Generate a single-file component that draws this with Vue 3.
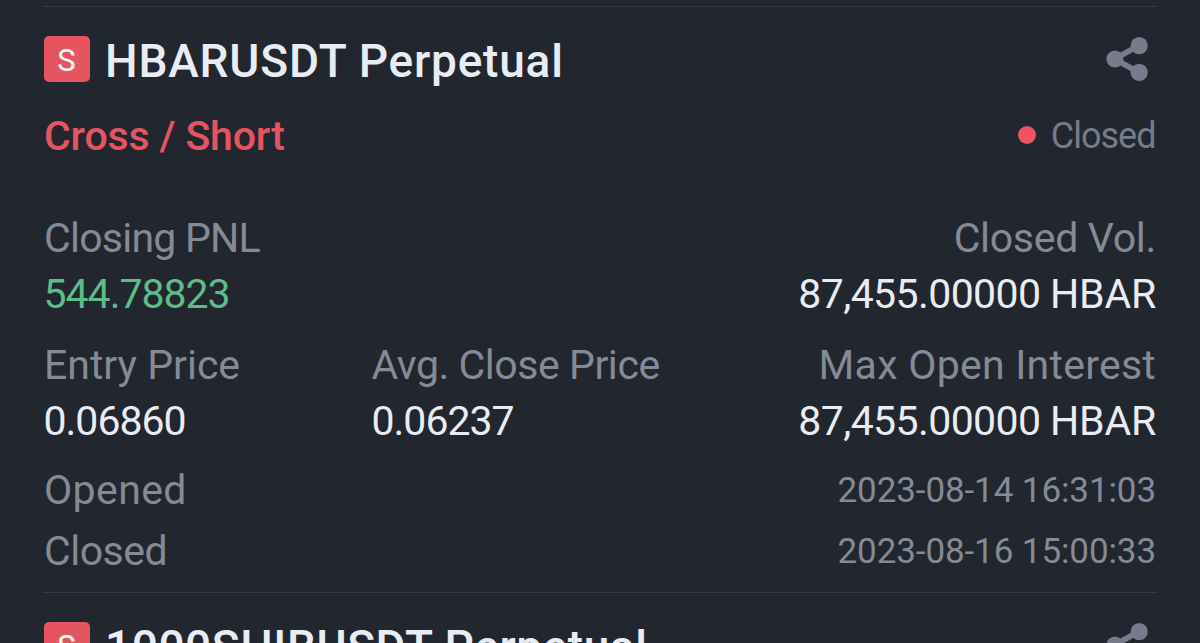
<template>
  <main class="history">
    <article v-for="p in positions" :key="p.symbol" class="card">
      <header class="card-head">
        <span class="badge">S</span>
        <h2 class="symbol">{{ p.symbol }} Perpetual</h2>
        <svg class="share" viewBox="0 0 42 44">
          <path d="M33 8.5 L8.5 22 L33 35.5" fill="none" stroke="currentColor" stroke-width="5.8" />
          <circle cx="8.9" cy="22" r="8.6" />
          <circle cx="33.2" cy="8.7" r="8.6" />
          <circle cx="33.2" cy="35.3" r="8.6" />
        </svg>
      </header>

      <template v-if="p.side">
        <div class="row side-row">
          <span class="side">{{ p.side }}</span>
          <span class="status"><i class="dot"></i><span>Closed</span></span>
        </div>

        <div class="row pnl-row">
          <div class="cell">
            <span class="label pnl-label">Closing PNL</span>
            <span class="value profit">{{ p.pnl }}</span>
          </div>
          <div class="cell right">
            <span class="label vol-label">Closed Vol.</span>
            <span class="value amount">{{ p.volume }} <span class="unit">HBAR</span></span>
          </div>
        </div>

        <div class="prices">
          <div class="cell">
            <span class="label">Entry Price</span>
            <span class="value">{{ p.entry }}</span>
          </div>
          <div class="cell">
            <span class="label close-label">Avg. Close Price</span>
            <span class="value">{{ p.close }}</span>
          </div>
          <div class="cell right">
            <span class="label interest-label">Max Open Interest</span>
            <span class="value amount">{{ p.volume }} <span class="unit">HBAR</span></span>
          </div>
        </div>

        <div class="times">
          <div class="row time-row">
            <span class="label opened-label">Opened</span>
            <time>{{ p.opened }}</time>
          </div>
          <div class="row time-row">
            <span class="label closed-label">Closed</span>
            <time>{{ p.closed }}</time>
          </div>
        </div>
      </template>
    </article>
  </main>
</template>

<script setup>
const positions = [
  {
    symbol: 'HBARUSDT',
    side: 'Cross / Short',
    pnl: '544.78823',
    volume: '87,455.00000',
    entry: '0.06860',
    close: '0.06237',
    opened: '2023-08-14 16:31:03',
    closed: '2023-08-16 15:00:33',
  },
  // only the head of this one is in view
  { symbol: '1000SHIBUSDT' },
]
</script>

<style>
body {
  margin: 0;
  background: #22262f;
  overflow: hidden;
}
</style>

<style scoped>
.history {
  box-sizing: border-box;
  height: 643px;
  padding: 6px 43px 0;
  overflow: hidden;
  background: #22262f;
  color: #eaecf3;
  font-family: Roboto, "Liberation Sans", sans-serif;
}

.card {
  box-sizing: border-box;
  height: 586px;
  padding-top: 22px;
  border-top: 1px solid #353943;
}

.card-head {
  display: flex;
  align-items: center;
  height: 60px;
}

.badge {
  width: 46px;
  height: 46px;
  margin-left: 0.5px;
  border-radius: 5px;
  background: #e45561;
  color: #fff;
  font-size: 31px;
  line-height: 49px;
  text-align: center;
}

.symbol {
  margin: 0 0 0 15.5px;
  padding-top: 3px;
  font-size: 46px;
  font-weight: 500;
  line-height: 56px;
  letter-spacing: 0.8px;
  white-space: nowrap;
}

.card + .card .symbol {
  letter-spacing: 0.55px;
}

.share {
  width: 42px;
  height: 44px;
  margin-left: auto;
  margin-right: 9px;
  color: #767c8c;
  fill: currentColor;
}

.row {
  display: flex;
  justify-content: space-between;
}

.side-row {
  height: 56px;
  margin-top: 19px;
  line-height: 56px;
}

.side {
  padding-left: 1px;
  color: #e45561;
  font-size: 41px;
  font-weight: 500;
  letter-spacing: -0.15px;
}

.status {
  display: flex;
  align-items: center;
  gap: 15px;
  color: #767c88;
  font-size: 36px;
  letter-spacing: -1px;
}

.dot {
  width: 18px;
  height: 18px;
  margin-top: -2px;
  border-radius: 50%;
  background: #ee5361;
}

.status span {
  padding-right: 1.5px;
}

.pnl-row {
  margin-top: 46px;
}

.prices {
  display: grid;
  grid-template-columns: 328px 1fr 1fr;
  margin-top: 15px;
}

.cell {
  display: flex;
  flex-direction: column;
  line-height: 56px;
  white-space: nowrap;
}

.right {
  align-items: flex-end;
  padding-right: 1px;
}

.label {
  padding-left: 1px;
  color: #848a96;
  font-size: 41px;
}

.right .label {
  padding-left: 0;
}

.pnl-label {
  letter-spacing: -0.75px;
}

.vol-label {
  letter-spacing: -0.3px;
}

.close-label {
  padding-left: 0.5px;
  letter-spacing: -0.45px;
}

.interest-label {
  letter-spacing: 0.25px;
}

.opened-label {
  letter-spacing: 0.4px;
}

.closed-label {
  letter-spacing: -0.5px;
}

.value {
  padding-left: 0.5px;
  font-size: 41px;
  letter-spacing: -1px;
}

.amount {
  letter-spacing: -0.6px;
}

.unit {
  letter-spacing: -0.2px;
}

.profit {
  color: #5dbd89;
}

.times {
  margin-top: 10px;
}

.time-row {
  height: 61px;
  line-height: 62px;
}

time {
  padding-top: 1px;
  padding-right: 1px;
  color: #848a96;
  font-size: 35px;
  letter-spacing: -0.1px;
}
</style>
